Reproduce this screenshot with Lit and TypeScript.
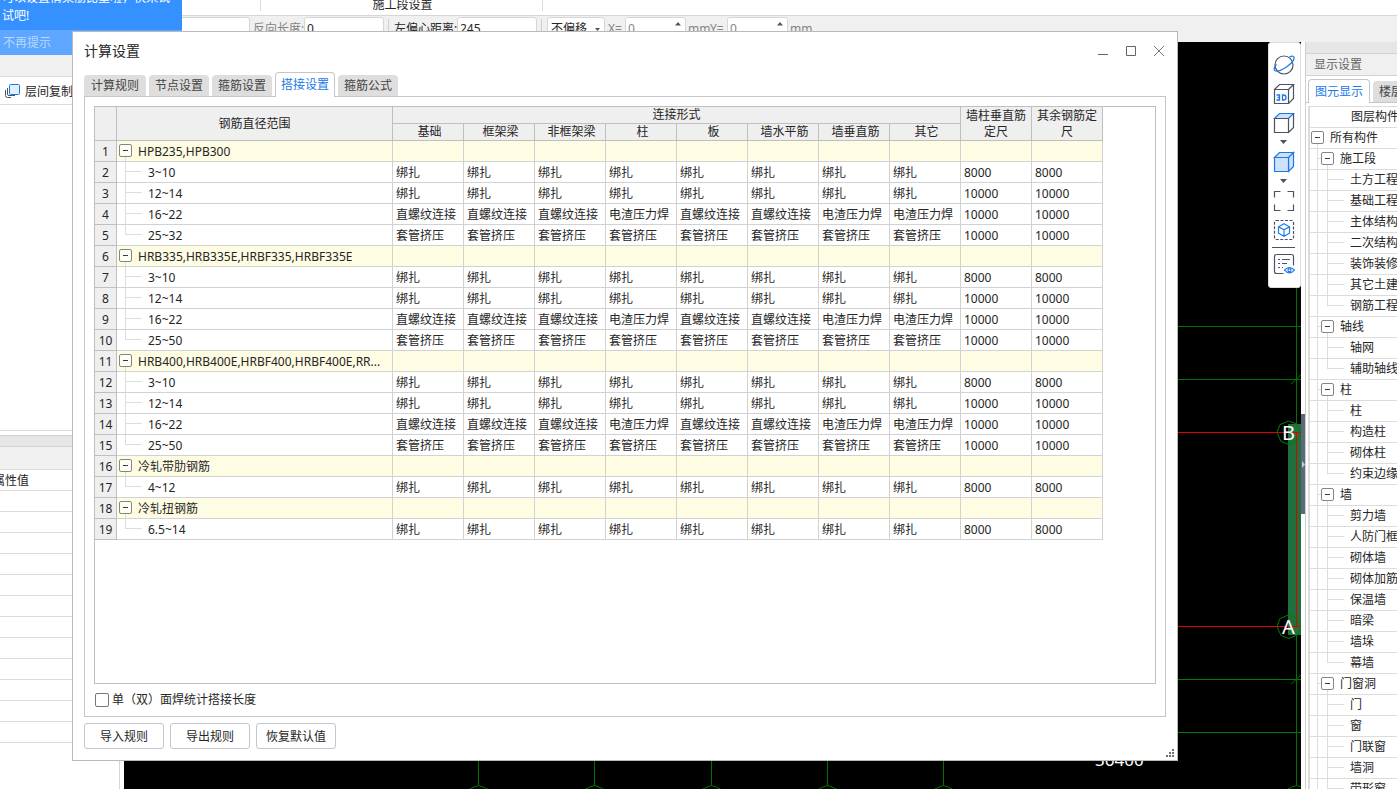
import { LitElement, html, svg, css, nothing } from "lit";
import { customElement, state } from "lit/decorators.js";

type Row = { label: string; group?: boolean; last?: boolean; cells?: string[] };

const TIE = "绑扎";
const THREAD = "直螺纹连接";
const SLAG = "电渣压力焊";
const SLEEVE = "套管挤压";

const tied = (label: string, len: string, last = false): Row => ({
  label,
  last,
  cells: [...Array(8).fill(TIE), len, len],
});
const mixed = (label: string): Row => ({
  label,
  cells: [THREAD, THREAD, THREAD, SLAG, THREAD, THREAD, SLAG, SLAG, "10000", "10000"],
});
const sleeved = (label: string): Row => ({
  label,
  last: true,
  cells: [...Array(8).fill(SLEEVE), "10000", "10000"],
});

const ROWS: Row[] = [
  { label: "HPB235,HPB300", group: true },
  tied("3~10", "8000"),
  tied("12~14", "10000"),
  mixed("16~22"),
  sleeved("25~32"),
  { label: "HRB335,HRB335E,HRBF335,HRBF335E", group: true },
  tied("3~10", "8000"),
  tied("12~14", "10000"),
  mixed("16~22"),
  sleeved("25~50"),
  { label: "HRB400,HRB400E,HRBF400,HRBF400E,RR...", group: true },
  tied("3~10", "8000"),
  tied("12~14", "10000"),
  mixed("16~22"),
  sleeved("25~50"),
  { label: "冷轧带肋钢筋", group: true },
  tied("4~12", "8000", true),
  { label: "冷轧扭钢筋", group: true },
  tied("6.5~14", "8000", true),
];

const KINDS = ["基础", "框架梁", "非框架梁", "柱", "板", "墙水平筋", "墙垂直筋", "其它"];

const TREE: { name: string; items: string[] }[] = [
  { name: "施工段", items: ["土方工程", "基础工程", "主体结构", "二次结构", "装饰装修", "其它土建", "钢筋工程"] },
  { name: "轴线", items: ["轴网", "辅助轴线"] },
  { name: "柱", items: ["柱", "构造柱", "砌体柱", "约束边缘"] },
  { name: "墙", items: ["剪力墙", "人防门框", "砌体墙", "砌体加筋", "保温墙", "暗梁", "墙垛", "幕墙"] },
  { name: "门窗洞", items: ["门", "窗", "门联窗", "墙洞", "带形窗", "带形洞"] },
];

const toggle = (label: string) => html`
  <button class="toggle" aria-label=${"折叠 " + label}>
    <svg width="13" height="13" viewBox="0 0 13 13" fill="none">
      <rect x="0.5" y="0.5" width="12" height="12" rx="1.5" fill="#fff" fill-opacity=".6" stroke="#858585" />
      <path d="M4 6.5h5" stroke="#333a44" />
    </svg>
  </button>
`;

@customElement("drawing-canvas")
class DrawingCanvas extends LitElement {
  static styles = css`
    :host {
      display: block;
      overflow: hidden;
      background: #000;
    }
    svg {
      display: block;
    }
    text {
      font: 20px "Noto Sans", sans-serif;
      fill: #fff;
    }
    .dimension {
      font-size: 17px;
    }
  `;

  render() {
    const axes = [354, 470, 587, 703, 819, 1172];
    return html`
      <svg width="1177" height="747" viewBox="0 0 1177 747" fill="none" aria-label="轴网">
        <g stroke="#007400">
          <path d="M0 284.5h1177M0 337.5h1177" />
          <path d="M0 637.5h1177M0 690.5h1177" stroke="#008000" />
          ${axes.map(
            (x) => svg`<path d="M${x + 0.5} ${x === 1172 ? 200 : 690}V743.5M${x - 10} 748l6-3 4.500-1.500 4.500 1.500 6 3" />`
          )}
          <path d="M1167 342l10-9M1167 642l10-9" />
        </g>
        <rect x="1164" y="382" width="13" height="211" fill="#1f6f3f" />
        <path d="M0 390.500h1177M0 584.500h1177M1172.500 390v194" stroke="#e00000" />
        <path
          d="M1164.500 379l8 3 4.500 8.500-3 8-9 4-8-3-4-9 3-8zM1164.500 573l8 3 4.500 8.500-3 8-9 4-8-3-4-9 3-8z"
          stroke="#008000"
        />
        <text x="1158" y="398">B</text>
        <text x="1158" y="592">A</text>
        <text class="dimension" x="971" y="724">36400</text>
      </svg>
    `;
  }
}

@customElement("view-tools")
class ViewTools extends LitElement {
  static styles = css`
    :host {
      display: flex;
      flex-direction: column;
      align-items: center;
      box-sizing: border-box;
      width: 33px;
      padding: 11px 2px 0 0;
      background: #fff;
      border: 1px solid #ddd;
      border-radius: 3px;
    }
    button {
      display: block;
      margin: 0 0 7px;
      padding: 0;
      border: 0;
      background: none;
    }
    .menu {
      margin: -1px 0 6px;
    }
    hr {
      width: 23px;
      margin: -1px 0 5px;
      border: 0;
      border-top: 1px solid #4c5463;
    }
    svg {
      display: block;
    }
  `;

  private icon(label: string, body: unknown) {
    return html`<button aria-label=${label}>
      <svg width="22" height="22" viewBox="0 0 22 22" fill="none" stroke="#4c5463" stroke-width="1.2">${body}</svg>
    </button>`;
  }

  private menu(label: string) {
    return html`<button class="menu" aria-label=${label}>
      <svg width="7" height="5" viewBox="0 0 7 5"><path d="M0 0h7L3.500 4z" fill="#4c5463" /></svg>
    </button>`;
  }

  render() {
    return html`
      ${this.icon(
        "动态观察",
        svg`<circle cx="11" cy="11" r="9" />
          <path stroke="#1c78ea" d="M16.500 3c3-1.500 5-1 4.500 1.500-.6 2.600-3.500 5.800-7.500 8.500-4.500 3-9.500 4.800-11.500 3.800-1.800-1-.6-4 1.500-6.500" />`
      )}
      ${this.icon(
        "三维视图",
        svg`<path d="M1.500 6.500h14v14h-14zM1.500 6.500l5-5h14l-5 5M20.500 1.500v14l-5 5" />
          <path stroke="#1c78ea" stroke-width="1.300" d="M3.500 12h3v5h-3M4.500 14.500h2M9.500 12v5h1.200q2.300 0 2.300-2.500t-2.300-2.500z" />`
      )}
      ${this.icon(
        "俯视图",
        svg`<path d="M1.500 6.500l5-5h14l-5 5z" fill="#cfe2fb" stroke="#1c78ea" />
          <path d="M1.500 6.500h14v14h-14zM20.500 1.500v14l-5 5" />`
      )}
      ${this.menu("视图方向")}
      ${this.icon(
        "实体显示",
        svg`<g stroke="#1c78ea" fill="#cfe2fb"><path d="M1.500 6.500l5-5h14l-5 5zM15.500 6.500l5-5v14l-5 5z" />
          <path d="M1.500 6.500h14v14h-14z" /></g>`
      )}
      ${this.menu("显示方式")}
      ${this.icon("全屏", svg`<path d="M1.500 7.500v-6h6M14.500 1.500h6v6M20.500 14.500v6h-6M7.500 20.500h-6v-6" />`)}
      ${this.icon(
        "局部三维",
        svg`<rect x="1.500" y="1.500" width="19" height="19" rx="1.500" stroke-dasharray="3 1.500" />
          <path stroke="#1c78ea" d="M11 4.800l5.500 3v6.400l-5.500 3-5.500-3V7.800zM5.500 7.800l5.500 3 5.500-3M11 10.800v6.400" />`
      )}
      <hr />
      ${this.icon(
        "显示列表",
        svg`<path d="M10.500 20.500h-7q-2 0-2-2v-15q0-2 2-2h15q2 0 2 2v9M5 6.500h2M9 6.500h8M5 10.500h2M9 10.500h5M5 14.500h2M9 14.500h1" />
          <path stroke="#1c78ea" d="M11.500 17.200q5-5.400 10 0-5 5.400-10 0z" /><circle cx="16.500" cy="17.200" r="1.500" stroke="#1c78ea" />`
      )}
    `;
  }
}

@customElement("lap-dialog")
class LapDialog extends LitElement {
  @state() private active = 3;

  static styles = css`
    :host {
      display: flex;
      flex-direction: column;
      box-sizing: border-box;
      padding: 0 11px 11px;
      background: #fff;
      border: 1px solid #b9b9b9;
    }
    button {
      font: inherit;
      color: inherit;
    }
    .title-bar {
      display: flex;
      align-items: center;
      justify-content: space-between;
      height: 38px;
      flex: none;
    }
    h1 {
      margin: 0;
      font-size: 14px;
      font-weight: 400;
      line-height: 20px;
    }
    .window-buttons {
      display: flex;
      gap: 16px;
      padding-right: 1px;
    }
    .window-buttons button {
      padding: 0;
      border: 0;
      background: none;
    }
    .window-buttons svg {
      display: block;
    }
    .tabs {
      display: flex;
      align-items: flex-end;
      gap: 3px;
      height: 26px;
      flex: none;
    }
    .tab {
      height: 21px;
      padding: 0 6px;
      border: 0;
      border-radius: 4px 4px 0 0;
      background: #dedede;
      color: #444;
    }
    .tab:first-child {
      padding: 0 7px;
    }
    .tab.on {
      z-index: 1;
      height: 25px;
      margin-bottom: -1px;
      padding: 0 5px 1px;
      border: 1px solid #c4c6cb;
      border-bottom: 0;
      background: #fff;
      color: #1c78ea;
    }
    .page {
      display: flex;
      flex-direction: column;
      flex: 1;
      min-height: 0;
      padding: 9px 9px 0;
      border: 1px solid #c4c6cb;
    }
    .grid {
      flex: 1;
      min-height: 0;
      overflow: hidden;
      border: 1px solid #bfbfbf;
    }
    table {
      width: 1008px;
      table-layout: fixed;
      border-spacing: 0;
    }
    .c-num {
      width: 22px;
    }
    .c-name {
      width: 276px;
    }
    th,
    td {
      box-sizing: border-box;
      padding: 0;
      font-weight: 400;
      border-right: 1px solid #d2d2d2;
      border-bottom: 1px solid #d2d2d2;
    }
    thead th {
      height: 17px;
      line-height: 16px;
      background: #efefef;
      border-color: #bfbfbf;
    }
    .kind {
      padding-left: 3px;
    }
    tbody th,
    tbody td {
      height: 21px;
      padding-top: 2px;
      line-height: 18px;
      white-space: nowrap;
    }
    tbody th {
      background: #efefef;
      border-color: #bfbfbf;
    }
    tbody td {
      padding-left: 3px;
    }
    tbody .name {
      padding: 0;
    }
    .group td {
      background: #fffce4;
    }
    .entry {
      display: flex;
      height: 20px;
      overflow: hidden;
    }
    .text {
      padding-top: 2px;
    }
    .knot {
      display: flex;
      width: 19px;
      padding: 3px 0 0 2px;
      background: linear-gradient(#ddd, #ddd) 8px 16px / 1px 4px no-repeat;
    }
    .branch {
      width: 31px;
      background:
        linear-gradient(#ddd, #ddd) 8px 0 / 1px 100% no-repeat,
        linear-gradient(#ddd, #ddd) 8px 9px / 17px 1px no-repeat;
    }
    .branch.end {
      background:
        linear-gradient(#ddd, #ddd) 8px 0 / 1px 9px no-repeat,
        linear-gradient(#ddd, #ddd) 8px 9px / 17px 1px no-repeat;
    }
    .toggle {
      display: block;
      width: 13px;
      height: 13px;
      padding: 0;
      border: 0;
      background: none;
    }
    .toggle svg {
      display: block;
    }
    .option {
      display: flex;
      align-items: center;
      gap: 3px;
      height: 32px;
      flex: none;
      line-height: 20px;
    }
    .option input {
      appearance: none;
      box-sizing: border-box;
      width: 14px;
      height: 14px;
      margin: 0 0 0 1px;
      border: 1px solid #777;
      border-radius: 2px;
      background: #fff;
    }
    .option input:checked {
      background: #1c78ea;
    }
    .actions {
      display: flex;
      gap: 6px;
      flex: none;
      padding-top: 6px;
    }
    .actions button {
      width: 80px;
      height: 26px;
      padding: 1px 0 0;
      border: 1px solid #c4c6cb;
      border-radius: 3px;
      background: #fff;
    }
    .grip {
      position: absolute;
      right: 3px;
      bottom: 3px;
    }
  `;

  render() {
    const tabs = ["计算规则", "节点设置", "箍筋设置", "搭接设置", "箍筋公式"];
    return html`
      <div class="title-bar">
        <h1>计算设置</h1>
        <div class="window-buttons">
          <button aria-label="最小化">
            <svg width="12" height="12" fill="none" stroke="#666"><path d="M1 9.500h10" /></svg>
          </button>
          <button aria-label="最大化">
            <svg width="12" height="12" fill="none" stroke="#666"><path d="M1.500 1.500h9v9h-9z" /></svg>
          </button>
          <button aria-label="关闭">
            <svg width="12" height="12" fill="none" stroke="#777"><path d="M1 1l10 10M11 1L1 11" /></svg>
          </button>
        </div>
      </div>
      <div class="tabs" role="tablist">
        ${tabs.map(
          (t, i) => html`<button
            role="tab"
            class=${i === this.active ? "tab on" : "tab"}
            aria-selected=${i === this.active ? "true" : "false"}
            @click=${() => (this.active = i)}
          >${t}</button>`
        )}
      </div>
      <div class="page">
        <div class="grid">
          <table>
            <colgroup>
              <col class="c-num" />
              <col class="c-name" />
              <col span="10" />
            </colgroup>
            <thead>
              <tr>
                <th rowspan="2"></th>
                <th rowspan="2" scope="col">钢筋直径范围</th>
                <th colspan="8" scope="colgroup">连接形式</th>
                <th rowspan="2" scope="col">墙柱垂直筋定尺</th>
                <th rowspan="2" scope="col">其余钢筋定尺</th>
              </tr>
              <tr>${KINDS.map((k) => html`<th class="kind" scope="col">${k}</th>`)}</tr>
            </thead>
            <tbody>
              ${ROWS.map(
                (r, i) => html`<tr class=${r.group ? "group" : nothing}>
                  <th scope="row">${i + 1}</th>
                  <td class="name">
                    <div class="entry">
                      ${r.group
                        ? html`<span class="knot">${toggle(r.label)}</span>`
                        : html`<span class=${r.last ? "branch end" : "branch"}></span>`}
                      <span class="text">${r.label}</span>
                    </div>
                  </td>
                  ${(r.cells ?? Array(10).fill("")).map((c) => html`<td>${c}</td>`)}
                </tr>`
              )}
            </tbody>
          </table>
        </div>
        <label class="option"><input type="checkbox" />单（双）面焊统计搭接长度</label>
      </div>
      <div class="actions">
        <button>导入规则</button>
        <button>导出规则</button>
        <button>恢复默认值</button>
      </div>
      <svg class="grip" width="8" height="8" fill="#6b717b" aria-hidden="true">
        <path d="M6 0h2v2H6zM3 3h2v2H3zM6 3h2v2H6zM0 6h2v2H0zM3 6h2v2H3zM6 6h2v2H6z" />
      </svg>
    `;
  }
}

@customElement("display-panel")
class DisplayPanel extends LitElement {
  static styles = css`
    :host {
      display: flex;
      flex-direction: column;
      box-sizing: border-box;
      overflow: hidden;
      white-space: nowrap;
      border-left: 1px solid #cfcfcf;
      background: #fff;
    }
    button {
      font: inherit;
      color: inherit;
    }
    .handle {
      height: 11px;
      flex: none;
      background: #e6e6e6;
      border-bottom: 1px solid #d2d2d2;
    }
    h2 {
      flex: none;
      margin: 0;
      padding-left: 8px;
      height: 21px;
      font-size: 12px;
      font-weight: 400;
      line-height: 21px;
      color: #666;
      background: #f0f0f0;
      border-bottom: 1px solid #d2d2d2;
    }
    .tabs {
      display: flex;
      flex: none;
      align-items: flex-end;
      gap: 3px;
      height: 26px;
      padding-left: 2px;
      border-bottom: 1px solid #c4c6cb;
    }
    .tab {
      flex: none;
      height: 21px;
      padding: 0 6px;
      border: 0;
      border-radius: 4px 4px 0 0;
      background: #dedede;
      color: #444;
    }
    .tab.on {
      height: 24px;
      margin-bottom: -1px;
      border: 1px solid #c4c6cb;
      border-bottom: 0;
      background: #fff;
      color: #1c78ea;
    }
    .tree {
      margin: 3px 0 0 2px;
      padding: 0;
      list-style: none;
      border-top: 1px solid #dcdcdc;
      border-left: 2px solid #dcdcdc;
    }
    .tree li {
      display: flex;
      box-sizing: border-box;
      height: 21px;
      line-height: 20px;
      border-bottom: 1px solid #dcdcdc;
    }
    .head {
      padding-left: 41px;
    }
    .root,
    .node,
    .leaf {
      --rule: linear-gradient(#ddd, #ddd);
    }
    .root {
      gap: 6px;
      padding-left: 1px;
      background: var(--rule) 7px 16px / 1px 4px no-repeat;
    }
    .node {
      gap: 6px;
      padding-left: 11px;
      background:
        var(--rule) 7px 0 / 1px 100% no-repeat,
        var(--rule) 7px 9px / 4px 1px no-repeat,
        var(--rule) 17px 16px / 1px 4px no-repeat;
    }
    .leaf {
      padding-left: 40px;
      background:
        var(--rule) 7px 0 / 1px 100% no-repeat,
        var(--rule) 17px 0 / 1px 100% no-repeat,
        var(--rule) 17px 9px / 17px 1px no-repeat;
    }
    .leaf.end {
      background:
        var(--rule) 7px 0 / 1px 100% no-repeat,
        var(--rule) 17px 0 / 1px 9px no-repeat,
        var(--rule) 17px 9px / 17px 1px no-repeat;
    }
    .toggle {
      display: block;
      width: 13px;
      height: 13px;
      margin-top: 3px;
      padding: 0;
      border: 0;
      background: none;
    }
    .toggle svg {
      display: block;
    }
  `;

  render() {
    return html`
      <div class="handle"></div>
      <h2>显示设置</h2>
      <div class="tabs">
        <button class="tab on">图元显示</button>
        <button class="tab">楼层显示</button>
      </div>
      <ul class="tree">
        <li class="head">图层构件</li>
        <li class="root">${toggle("所有构件")}<span>所有构件</span></li>
        ${TREE.map(
          (n) => html`
            <li class="node">${toggle(n.name)}<span>${n.name}</span></li>
            ${n.items.map((t, i) => html`<li class=${i === n.items.length - 1 ? "leaf end" : "leaf"}>${t}</li>`)}
          `
        )}
      </ul>
    `;
  }
}

@customElement("app-root")
class AppRoot extends LitElement {
  static styles = css`
    :host {
      position: relative;
      display: flex;
      flex-direction: column;
      height: 100vh;
      overflow: hidden;
      background: #fff;
      color: #262626;
      font: 12px/16px "Noto Sans", "Noto Sans CJK SC", sans-serif;
    }
    .ribbon {
      display: flex;
      flex: none;
      justify-content: center;
      box-sizing: border-box;
      width: 283px;
      height: 11px;
      margin: 0 0 4px 260px;
      padding-left: 2px;
      line-height: 9px;
      border: solid #dcdcdc;
      border-width: 0 1px;
    }
    .options {
      display: flex;
      flex: none;
      align-items: center;
      box-sizing: border-box;
      height: 27px;
      padding-left: 170px;
      background: #f0f0f0;
      border-top: 1px solid #d6d6d6;
      white-space: nowrap;
    }
    .options input,
    .options select {
      box-sizing: border-box;
      height: 24px;
      padding: 0 2px 2px;
      border: 1px solid #d6d6d6;
      border-radius: 3px;
      background: #fff;
      font: inherit;
      color: inherit;
    }
    .options .wide {
      width: 80px;
    }
    .options .spin {
      display: flex;
      width: 61px;
      box-sizing: border-box;
      height: 24px;
      padding-right: 4px;
      border: 1px solid #d6d6d6;
      border-radius: 3px;
      background: #fff;
    }
    .options .spin input {
      flex: 1;
      min-width: 0;
      height: 22px;
      border: 0;
    }
    .spin svg {
      margin-top: 4px;
    }
    .pick {
      display: grid;
      align-items: center;
      justify-items: end;
    }
    .options .pick > * {
      grid-area: 1 / 1;
    }
    .pick svg {
      margin-right: 5px;
    }
    .options .pick select {
      appearance: none;
      width: 58px;
      padding: 0 3px 1px;
    }
    .label-short {
      width: 51px;
      padding-left: 3px;
    }
    .label-long {
      width: 63px;
    }
    .axis {
      width: 17px;
    }
    .pick + .axis {
      padding-left: 3px;
    }
    .unit {
      width: 22px;
      padding-left: 2px;
    }
    .dim {
      color: #858585;
    }
    .sep {
      width: 1px;
      height: 20px;
      margin: 0 5px 0 4px;
      background: #cfcfcf;
    }
    .body {
      display: flex;
      flex: 1;
      min-height: 0;
    }
    .left {
      display: flex;
      flex-direction: column;
      box-sizing: border-box;
      width: 120px;
      flex: none;
      border-right: 1px solid #d6d6d6;
    }
    .left-head {
      height: 34px;
      background: #f0f0f0;
      border-bottom: 1px solid #dcdcdc;
    }
    .copy {
      display: flex;
      align-items: center;
      gap: 4px;
      height: 28px;
      padding: 2px 0 0 5px;
      border: 0;
      border-bottom: 1px solid #dcdcdc;
      background: #fff;
      font: inherit;
      color: inherit;
    }
    .copy svg {
      margin-bottom: 2px;
    }
    .search {
      height: 18px;
      border-bottom: 1px solid #dcdcdc;
    }
    .list {
      height: 306px;
      border-bottom: 1px solid #dcdcdc;
    }
    .split {
      height: 10px;
      margin-top: 4px;
      border: solid #d2d2d2;
      border-width: 1px 0;
      background: #e6e6e6;
    }
    .prop-head {
      height: 22px;
      border-bottom: 1px solid #dcdcdc;
      background: #f0f0f0;
    }
    .prop {
      box-sizing: border-box;
      height: 21px;
      line-height: 21px;
      overflow: hidden;
      border-bottom: 1px solid #dcdcdc;
    }
    .prop span {
      display: block;
      margin-left: -7px;
    }
    drawing-canvas {
      flex: 1;
      min-width: 0;
      margin-left: 4px;
    }
    .fold {
      display: flex;
      align-items: center;
      width: 4px;
      flex: none;
      height: 100px;
      margin-top: 372px;
      padding: 0;
      border: 0;
      background: #5f6877;
    }
    display-panel {
      width: 92px;
      flex: none;
    }
    view-tools {
      position: absolute;
      top: 42px;
      right: 96px;
      height: 246px;
    }
    .tip {
      position: absolute;
      top: 0;
      left: 0;
      width: 182px;
      height: 55px;
      overflow: hidden;
      background: #3591ff;
      color: #fff;
    }
    .tip p {
      display: flex;
      flex-direction: column;
      justify-content: flex-end;
      box-sizing: border-box;
      height: 30px;
      margin: 0;
      padding: 0 0 5px 2px;
      line-height: 18px;
      white-space: nowrap;
    }
    .tip a {
      display: block;
      height: 25px;
      padding-left: 3px;
      line-height: 25px;
      background: #5ea6ff;
      color: #b9d8ff;
      text-decoration: none;
    }
    lap-dialog {
      position: absolute;
      inset: 31px 219px 28px 72px;
    }
  `;

  render() {
    const up = html`<svg width="6" height="4"><path d="M0 3.500L3 0l3 3.500z" fill="#4c5463" /></svg>`;
    return html`
      <div class="ribbon">施工段设置</div>
      <div class="options">
        <input class="wide" aria-label="长度" />
        <label class="label-short dim" for="back">反向长度:</label>
        <input class="wide" id="back" value="0" />
        <span class="sep"></span>
        <label for="ecc" class="label-long">左偏心距离:</label>
        <input class="wide" id="ecc" value="245" />
        <span class="sep"></span>
        <span class="pick">
          <select aria-label="偏移方式"><option>不偏移</option></select>
          <svg width="5" height="3"><path d="M0 0h5L2.500 3z" fill="#4c5463" /></svg>
        </span>
        <label class="dim axis" for="dx">X=</label>
        <span class="spin dim"><input id="dx" value="0" />${up}</span>
        <span class="unit dim">mm</span>
        <label class="dim axis" for="dy">Y=</label>
        <span class="spin dim"><input id="dy" value="0" />${up}</span>
        <span class="unit dim">mm</span>
      </div>
      <div class="body">
        <div class="left">
          <div class="left-head"></div>
          <button class="copy">
            <svg width="16" height="16" viewBox="0 0 16 16" fill="none">
              <path d="M.5 7v5.500q0 2 2 2H6M2.500 5v6q0 1.500 1.500 1.500h6" stroke="#4c5463" />
              <rect x="4.500" y="1.500" width="10" height="10" rx="1" fill="#e3effd" stroke="#1c78ea" />
            </svg>
            层间复制
          </button>
          <div class="search"></div>
          <div class="list"></div>
          <div class="split"></div>
          <div class="prop-head"></div>
          <div class="prop"><span>属性值</span></div>
          ${Array.from({ length: 12 }, () => html`<div class="prop"></div>`)}
        </div>
        <drawing-canvas></drawing-canvas>
        <button class="fold" aria-label="收起">
          <svg width="4" height="7"><path d="M1 0l3 3.500L1 7z" fill="#c9ccd2" /></svg>
        </button>
        <display-panel></display-panel>
      </div>
      <view-tools></view-tools>
      <div class="tip">
        <p><span>可以设置情架筋比重啦，快来试</span><span>试吧!</span></p>
        <a href="#">不再提示</a>
      </div>
      <lap-dialog></lap-dialog>
    `;
  }
}
